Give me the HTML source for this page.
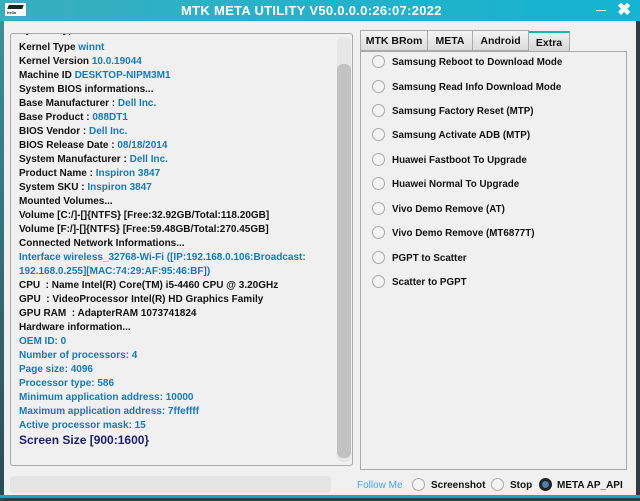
<!DOCTYPE html>
<html><head><style>
*{margin:0;padding:0;box-sizing:border-box}
body{width:640px;height:501px;overflow:hidden;background:#2f3c40;font-family:"Liberation Sans",Tahoma,sans-serif;position:relative}
#win{position:absolute;left:4px;top:0;width:632px;height:495px;background:#f0f0f0}
#title{position:absolute;left:0;top:0;width:640px;height:21px;background:linear-gradient(90deg,#39aebf,#14b4d2);}
#title .t{position:absolute;left:181px;top:3px;color:#fff;font-weight:bold;font-size:13px;letter-spacing:0.3px}
#logo{position:absolute;left:5px;top:3px;width:21px;height:13px;background:#fff}
#logo i{position:absolute;left:3px;top:2px;width:15px;height:4px;background:#222;transform:skewX(-20deg)}
#logo b{position:absolute;left:2px;top:7px;font-size:4px;color:#222}
#title .min{position:absolute;left:596px;top:10px;width:10px;height:1px;background:#fff}
#title .x{position:absolute;left:617px;top:0px;color:#fff;font-weight:bold;font-size:17px}
#edgeL{position:absolute;left:0;top:21px;width:4px;height:480px;background:linear-gradient(#3e8e9a,#2b4b55)}
#edgeB{position:absolute;left:0;top:495px;width:640px;height:3px;background:#1aa7b8}
#lp{position:absolute;left:10px;top:33px;width:343px;height:433px;border:1px solid #aaa;border-radius:3px;background:#f0f0f0;overflow:hidden}
#lp .txt{position:absolute;left:8px;top:-7px;font-size:10px;font-weight:bold;line-height:14px;color:#111;white-space:nowrap}
.b{color:#1a7ab7}
#sb{position:absolute;left:326px;top:3px;width:14px;height:425px;background:#e6e6e6;border-radius:6px}
#sb i{position:absolute;left:0;top:27px;width:14px;height:394px;background:#c2c2c2;border-radius:6px}
.tab{position:absolute;top:0;height:21px;border:1px solid #aaa;background:linear-gradient(#f4f4f4,#dcdcdc);font-size:10.5px;font-weight:bold;text-align:center;line-height:20px;color:#111}
#rp{position:absolute;left:360px;top:51px;width:267px;height:419px;border:1px solid #aaa;background:#f0f0f0}
.opt{position:absolute;left:11px;font-size:9.8px;font-weight:bold;color:#111;white-space:nowrap}
.r{display:inline-block;width:13px;height:13px;border:1.5px solid #aaa;border-radius:50%;background:#f4f4f4;vertical-align:middle;margin-right:7px;position:relative;top:-1px}
#prog{position:absolute;left:10px;top:476px;width:321px;height:17px;background:#e4e4e4;border-radius:4px}
.bt{position:absolute;top:480px;font-size:10px;font-weight:bold;white-space:nowrap;color:#111}
.br{position:absolute;top:478px;width:13px;height:13px;border:1.5px solid #aaa;border-radius:50%;background:#f4f4f4}
</style></head><body>
<div id="win"></div>
<div id="edgeL"></div>
<div id="title"><div id="logo"><i></i><b>hello</b></div><div class="t">MTK META UTILITY V50.0.0.0:26:07:2022</div><div class="min"></div><div class="x">✖</div></div>
<div id="lp"><div class="txt">
<span style="position:relative;top:-3px">System Type</span><br>
Kernel Type <span class="b">winnt</span><br>
Kernel Version <span class="b">10.0.19044</span><br>
Machine ID <span class="b">DESKTOP-NIPM3M1</span><br>
System BIOS informations...<br>
Base Manufacturer : <span class="b">Dell Inc.</span><br>
Base Product : <span class="b">088DT1</span><br>
BIOS Vendor : <span class="b">Dell Inc.</span><br>
BIOS Release Date : <span class="b">08/18/2014</span><br>
System Manufacturer : <span class="b">Dell Inc.</span><br>
Product Name : <span class="b">Inspiron 3847</span><br>
System SKU : <span class="b">Inspiron 3847</span><br>
Mounted Volumes...<br>
Volume [C:/]-[]{NTFS} [Free:32.92GB/Total:118.20GB]<br>
Volume [F:/]-[]{NTFS} [Free:59.48GB/Total:270.45GB]<br>
Connected Network Informations...<br>
<span class="b">Interface wireless_32768-Wi-Fi ([IP:192.168.0.106:Broadcast:<br>192.168.0.255][MAC:74:29:AF:95:46:BF])</span><br>
CPU &nbsp;: Name Intel(R) Core(TM) i5-4460 CPU @ 3.20GHz<br>
GPU &nbsp;: VideoProcessor Intel(R) HD Graphics Family<br>
GPU RAM &nbsp;: AdapterRAM 1073741824<br>
Hardware information...<br>
<span class="b">OEM ID: 0<br>Number of processors: 4<br>Page size: 4096<br>Processor type: 586<br>Minimum application address: 10000<br>Maximum application address: 7ffeffff<br>Active processor mask: 15</span><br>
<span style="color:#1f1f6e;font-size:12px">Screen Size [900:1600}</span>
</div><div id="sb"><i></i></div></div>
<div class="tab" style="left:360px;top:30px;width:68px">MTK BRom</div>
<div class="tab" style="left:427px;top:30px;width:46px">META</div>
<div class="tab" style="left:472px;top:30px;width:57px">Android</div>
<div class="tab" style="left:528px;top:31px;width:42px;border-top:2px solid #1bb6a6;background:linear-gradient(#f0f0f0,#d6d6d6)">Extra</div>
<div id="rp">
<div class="opt" style="top:4px"><span class="r"></span>Samsung Reboot to Download Mode</div>
<div class="opt" style="top:29px"><span class="r"></span>Samsung Read Info Download Mode</div>
<div class="opt" style="top:53px"><span class="r"></span>Samsung Factory Reset (MTP)</div>
<div class="opt" style="top:77px"><span class="r"></span>Samsung Activate ADB (MTP)</div>
<div class="opt" style="top:102px"><span class="r"></span>Huawei Fastboot To Upgrade</div>
<div class="opt" style="top:126px"><span class="r"></span>Huawei Normal To Upgrade</div>
<div class="opt" style="top:151px"><span class="r"></span>Vivo Demo Remove (AT)</div>
<div class="opt" style="top:175px"><span class="r"></span>Vivo Demo Remove (MT6877T)</div>
<div class="opt" style="top:200px"><span class="r"></span>PGPT to Scatter</div>
<div class="opt" style="top:224px"><span class="r"></span>Scatter to PGPT</div>
</div>
<div id="prog"></div>
<div class="bt" style="left:357px;color:#4aa3e6;font-weight:normal">Follow Me</div>
<div class="br" style="left:412px"></div>
<div class="bt" style="left:431px">Screenshot</div>
<div class="br" style="left:491px"></div>
<div class="bt" style="left:510px">Stop</div>
<div class="br" style="left:539px;border:3px solid #222;background:#4a7fb0"></div>
<div class="bt" style="left:557px">META AP_API</div>
<div id="edgeB"></div>
</body></html>
